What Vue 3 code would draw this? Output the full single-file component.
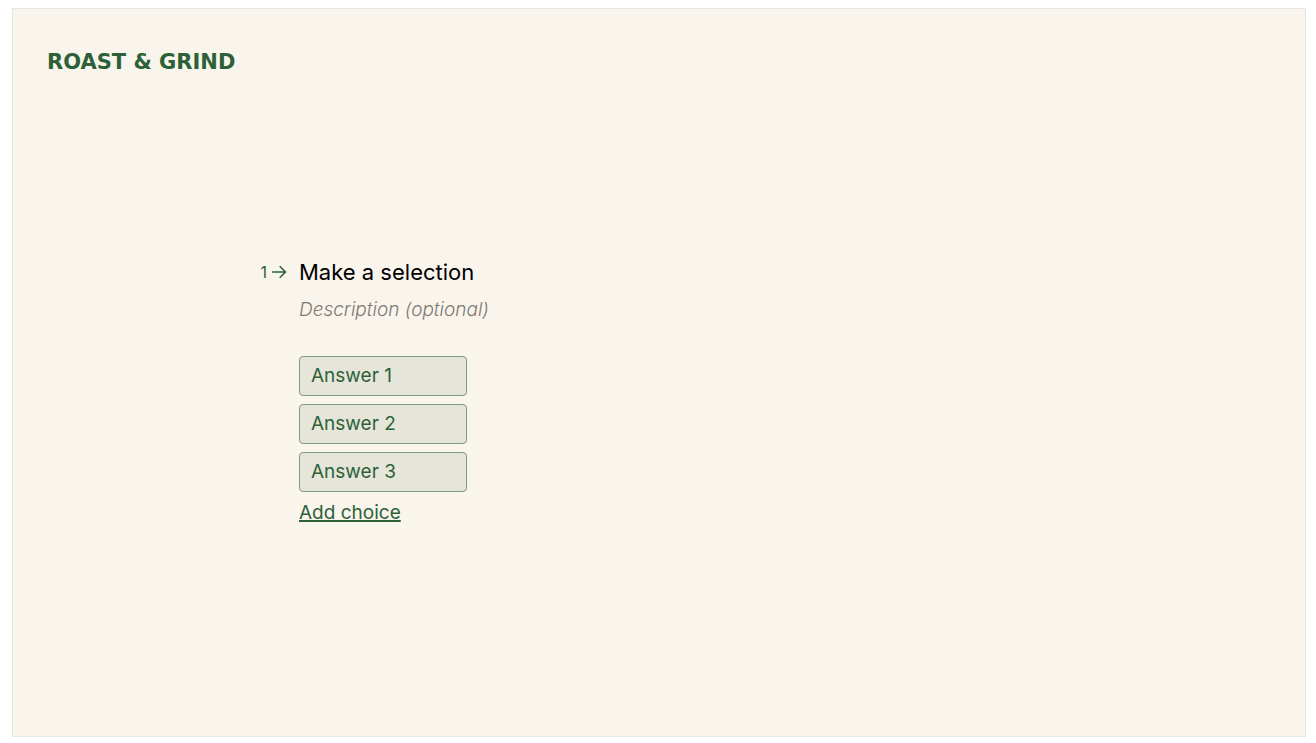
<script setup>
import { ref } from 'vue'

const description = ref('')
const answers = ref(['Answer 1', 'Answer 2', 'Answer 3'])

function addChoice() {
  answers.value.push(`Answer ${answers.value.length + 1}`)
}
</script>

<template>
  <div class="page">
    <div class="canvas">
      <header class="brand">ROAST &amp; GRIND</header>
      <main class="stage">
        <section class="question">
          <div class="number">
            <span>1</span>
            <svg class="arrow" viewBox="0 0 16 14" fill="none" aria-hidden="true">
              <path d="M1 7H14.4M8.7 1.2L14.5 7L8.7 12.8" stroke="currentColor" stroke-width="1.6" />
            </svg>
          </div>
          <h1 class="title">Make a selection</h1>
          <input
            v-model="description"
            class="description"
            type="text"
            placeholder="Description (optional)"
            aria-label="Description"
          />
          <ul class="choices">
            <li v-for="answer in answers" :key="answer">
              <button class="choice" type="button">{{ answer }}</button>
            </li>
          </ul>
          <button class="add" type="button" @click="addChoice">Add choice</button>
        </section>
      </main>
    </div>
  </div>
</template>

<style>
body {
  margin: 0;
  background: #fff;
}
</style>

<style scoped>
.page {
  box-sizing: border-box;
  display: flex;
  min-height: 100vh;
  padding: 8px 10px 6px 12px;
  font-family: Inter, "Liberation Sans", sans-serif;
  color: #2c6138;
}

.canvas {
  display: flex;
  flex: 1;
  flex-direction: column;
  border: 1px solid #e6e6e6;
  background: #f9f4ec;
}

.brand {
  padding: 39px 34px 0;
  font-family: "DejaVu Sans", sans-serif;
  font-size: 21px;
  font-weight: 700;
  line-height: 28px;
}

.stage {
  display: flex;
  flex: 1;
  align-items: center;
  justify-content: center;
  padding: 0 48px 28px;
}

.question {
  position: relative;
  display: flex;
  flex-direction: column;
  align-items: flex-start;
  width: 100%;
  max-width: 720px;
}

.number {
  position: absolute;
  top: 0;
  right: 100%;
  display: flex;
  align-items: center;
  gap: 4px;
  height: 28px;
  margin-right: 12px;
  font-size: 16px;
}

.arrow {
  width: 16px;
  height: 14px;
}

.title {
  margin: 0;
  font-size: 22px;
  font-weight: 400;
  line-height: 28px;
  color: #000;
}

.description {
  width: 100%;
  height: 28px;
  margin: 10px 0 0;
  padding: 0;
  border: 0;
  outline: 0;
  background: transparent;
  font: italic 300 19px/28px Inter, "Liberation Sans", sans-serif;
  color: #2c6138;
}

.description::placeholder {
  color: #7f7a74;
  opacity: 1;
}

.choices {
  display: flex;
  flex-direction: column;
  gap: 8px;
  min-width: 168px;
  margin: 32px 0 0;
  padding: 0;
  list-style: none;
}

.choice {
  display: block;
  width: 100%;
  height: 40px;
  padding: 1px 11px 0;
  border: 1px solid #80987f;
  border-radius: 4px;
  background: #e5e5d9;
  font: 400 19px/28px Inter, "Liberation Sans", sans-serif;
  color: #2c6138;
  text-align: left;
  cursor: pointer;
}

.add {
  margin: 7px 0 0;
  padding: 0;
  border: 0;
  background: none;
  font: 400 19px/28px Inter, "Liberation Sans", sans-serif;
  color: #2c6138;
  text-decoration: underline;
  text-decoration-thickness: 2px;
  cursor: pointer;
}
</style>
